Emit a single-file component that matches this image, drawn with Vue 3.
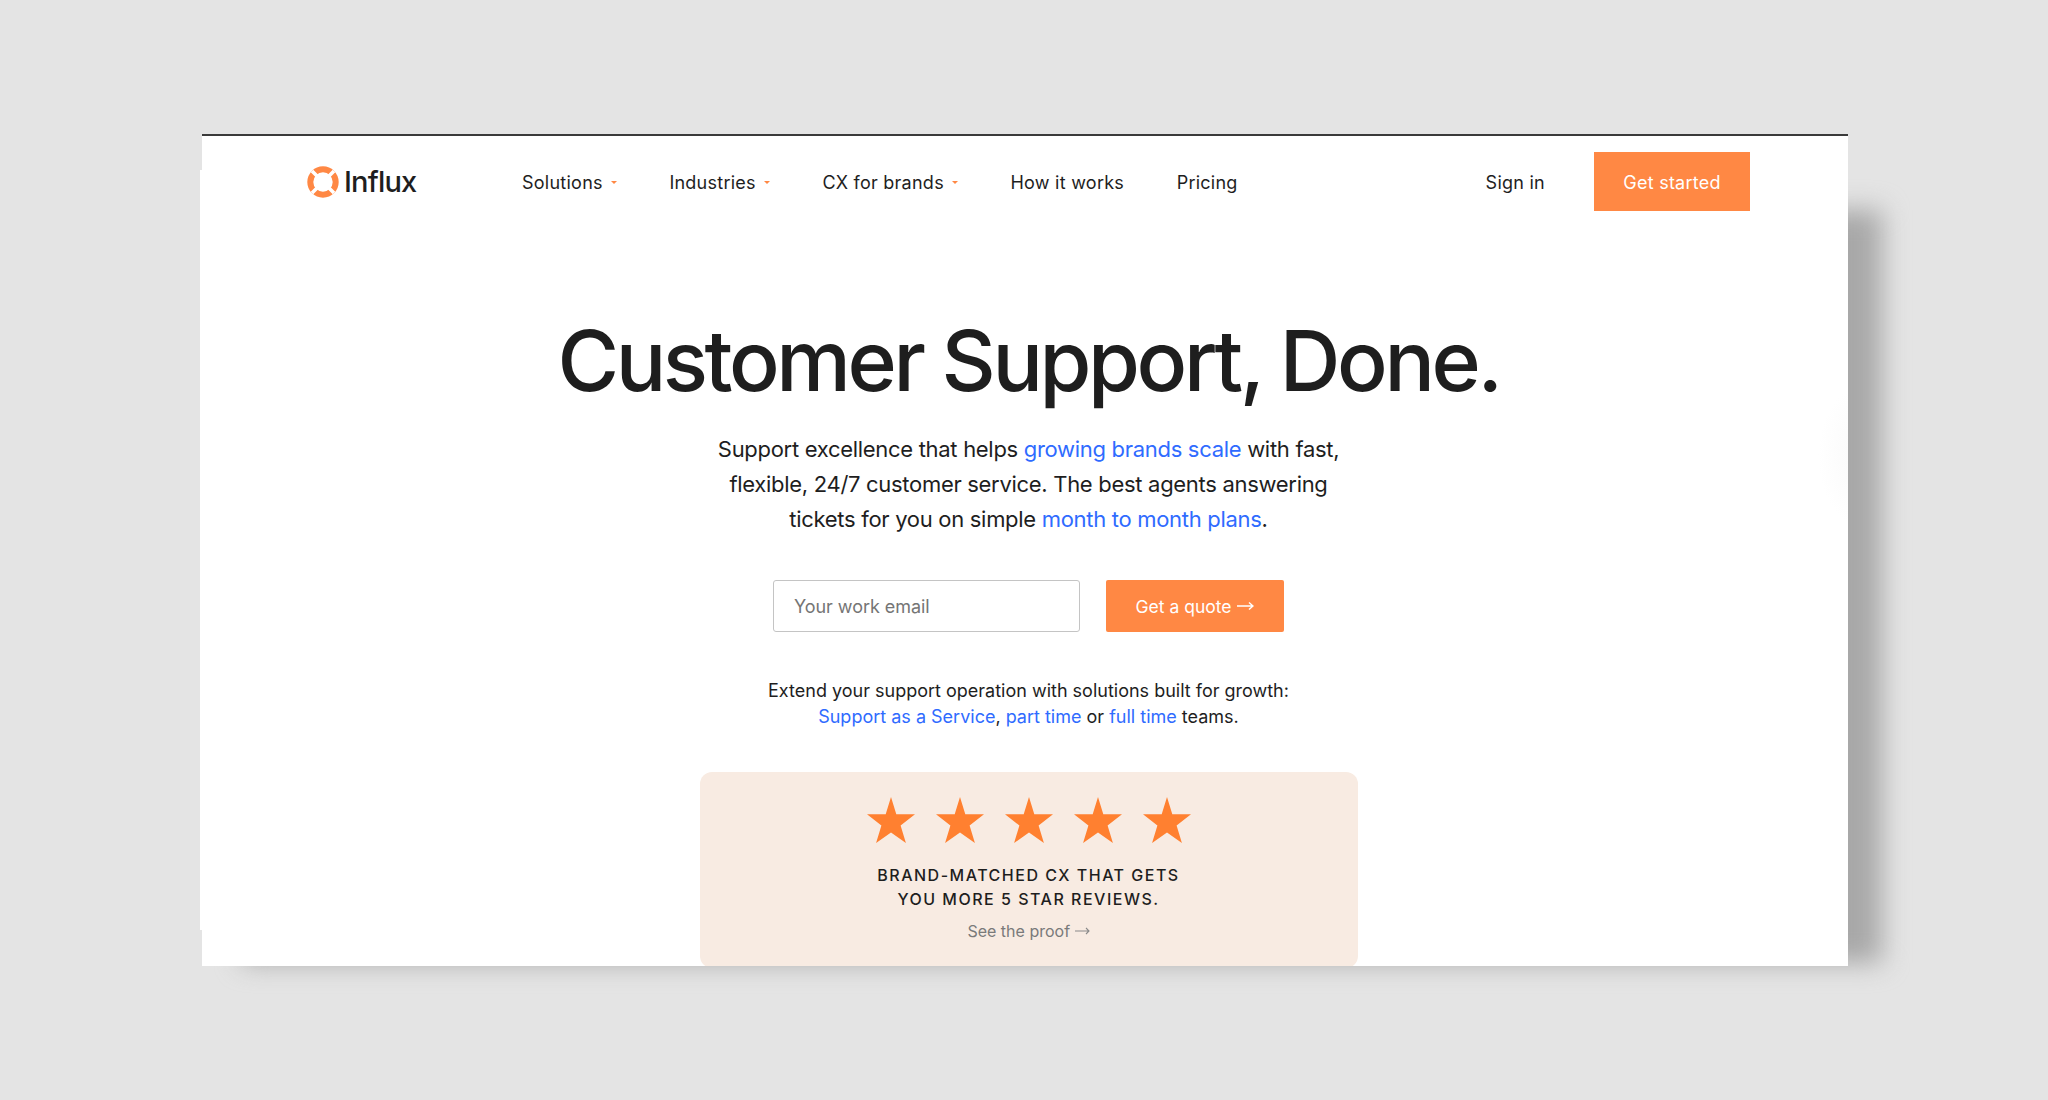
<script setup>
const navItems = [
  { label: "Solutions", caret: true },
  { label: "Industries", caret: true },
  { label: "CX for brands", caret: true },
  { label: "How it works", caret: false },
  { label: "Pricing", caret: false },
]
const stars = [1, 2, 3, 4, 5]
</script>

<template>
  <main class="stage">
    <div class="frame">
      <div class="drop"></div>
      <div class="edge"></div>
      <div class="sheet">
        <div class="ghost"></div>
        <header class="nav">
          <a class="logo">
            <svg width="32" height="32" viewBox="0 0 32 32">
              <circle cx="16" cy="16" r="12.700" fill="none" stroke="#ff8844" stroke-width="6" />
              <path d="M5 5l7 7M27 5l-7 7M5 27l7-7M27 27l-7-7" stroke="#fff" stroke-width="3.600" />
            </svg>
            <span>Influx</span>
          </a>
          <nav class="links">
            <a v-for="item in navItems" :key="item.label" class="link">
              {{ item.label }}<i v-if="item.caret" class="caret"></i>
            </a>
          </nav>
          <a class="signin">Sign in</a>
          <a class="started">Get started</a>
        </header>

        <section class="hero">
          <h1>Customer Support, Done.</h1>
          <p class="lead">
            Support excellence that helps <a>growing brands scale</a> with fast,<br />
            flexible, 24/7 customer service. The best agents answering<br />
            tickets for you on simple <a>month to month plans</a>.
          </p>
          <form class="quote" @submit.prevent>
            <input type="text" placeholder="Your work email" />
            <button>
              Get a quote
              <svg width="17" height="10" viewBox="0 0 17 10">
                <path d="M0 5h16M12 1.500 16 5l-4 3.500" fill="none" stroke="#fff" stroke-width="1.500" />
              </svg>
            </button>
          </form>
          <p class="extend">
            Extend your support operation with solutions built for growth:<br />
            <a>Support as a Service</a>, <a>part time</a> or <a>full time</a> teams.
          </p>
          <div class="reviews">
            <div class="stars">
              <svg v-for="s in stars" :key="s" width="48" height="46" viewBox="0 0 48 46">
                <path d="M24 0 L29.300 17.300 L48 17.300 L33.600 28.500 L38.900 46 L24 35.600 L9.100 46 L14.400 28.500 L0 17.300 L18.700 17.300 Z" fill="#ff8030" />
              </svg>
            </div>
            <h2>BRAND-MATCHED CX THAT GETS<br />YOU MORE 5 STAR REVIEWS.</h2>
            <a class="proof">
              See the proof
              <svg width="15" height="8" viewBox="0 0 15 8">
                <path d="M0 4h14M11 1l3 3-3 3" fill="none" stroke="#8a8a8a" stroke-width="1.100" />
              </svg>
            </a>
          </div>
        </section>
      </div>
    </div>
  </main>
</template>

<style>
body {
  margin: 0;
  background: #e4e4e4;
}
</style>

<style scoped>
.stage {
  height: 1100px;
  padding: 134px 200px 0 202px;
  box-sizing: border-box;
  overflow: hidden;
  background: #e4e4e4;
  font-family: Inter, "Liberation Sans", sans-serif;
  color: #1e1e1e;
}

.frame {
  position: relative;
  height: 832px;
}

.drop {
  position: absolute;
  left: 40px;
  right: -34px;
  top: 76px;
  bottom: 3px;
  background: #a8a8a8;
  filter: blur(13px);
}

.edge {
  position: absolute;
  left: -2px;
  top: 36px;
  width: 4px;
  height: 760px;
  background: #fff;
}

.sheet {
  position: relative;
  height: 100%;
  box-sizing: border-box;
  border-top: 2px solid #3a3a3a;
  background: #fff;
  overflow: hidden;
}

.ghost {
  position: absolute;
  right: -60px;
  top: 250px;
  width: 90px;
  height: 140px;
  border-radius: 50%;
  background: radial-gradient(closest-side, #f9f9f9, #fff);
}

.nav {
  position: relative;
  display: flex;
  align-items: center;
  height: 59px;
  margin-top: 16px;
  padding-left: 105px;
  padding-right: 98px;
  font-size: 18px;
  letter-spacing: 0.25px;
}

.logo {
  display: flex;
  align-items: center;
  gap: 5px;
  width: 215px;
  font-size: 29px;
  font-weight: 500;
  letter-spacing: -0.8px;
}

.links {
  display: flex;
  gap: 52.600px;
  flex: 1;
  padding-top: 2px;
}

.link {
  display: flex;
  align-items: center;
}

.caret {
  width: 0;
  height: 0;
  margin-left: 8px;
  border-left: 3px solid transparent;
  border-right: 3px solid transparent;
  border-top: 3px solid #ff8844;
}

.signin {
  margin-right: 49px;
  padding-top: 2px;
}

.started {
  width: 156px;
  height: 59px;
  line-height: 61px;
  text-align: center;
  background: #ff8844;
  color: #fff;
}

.hero {
  position: relative;
  display: flex;
  flex-direction: column;
  align-items: center;
  padding-left: 7px;
}

h1 {
  margin: 100px 0 0;
  font-size: 84px;
  line-height: 100px;
  font-weight: 500;
  letter-spacing: -3.4px;
}

.lead {
  margin: 21px 0 0;
  font-size: 22px;
  line-height: 35px;
  letter-spacing: -0.3px;
  text-align: center;
}

.lead a,
.extend a {
  color: #2f6bff;
}

.quote {
  display: flex;
  gap: 26px;
  margin-top: 43px;
}

.quote input {
  width: 307px;
  height: 52px;
  box-sizing: border-box;
  padding: 0 20px;
  border: 1px solid #c4c4c4;
  border-radius: 3px;
  font: inherit;
  font-size: 18px;
  letter-spacing: -0.05px;
}

.quote input::placeholder {
  color: #757575;
}

.quote button {
  width: 178px;
  height: 52px;
  border: 0;
  border-radius: 2px;
  background: #ff8844;
  color: #fff;
  font: inherit;
  font-size: 17.500px;
}

.quote button svg {
  margin-left: 1px;
  vertical-align: 2px;
}

.extend {
  margin: 46px 0 0;
  font-size: 18px;
  line-height: 26px;
  text-align: center;
}

.reviews {
  width: 658px;
  height: 196px;
  margin-top: 42px;
  padding-top: 25px;
  box-sizing: border-box;
  border-radius: 12px;
  background: #f8ebe2;
  text-align: center;
}

.stars {
  display: flex;
  justify-content: center;
  gap: 21px;
}

h2 {
  margin: 20px 0 0;
  font-size: 16px;
  line-height: 24px;
  font-weight: 500;
  letter-spacing: 1.5px;
}

.proof {
  display: block;
  margin-top: 10px;
  font-size: 16px;
  color: #7a7a7a;
}

.proof svg {
  vertical-align: 2px;
}
</style>
